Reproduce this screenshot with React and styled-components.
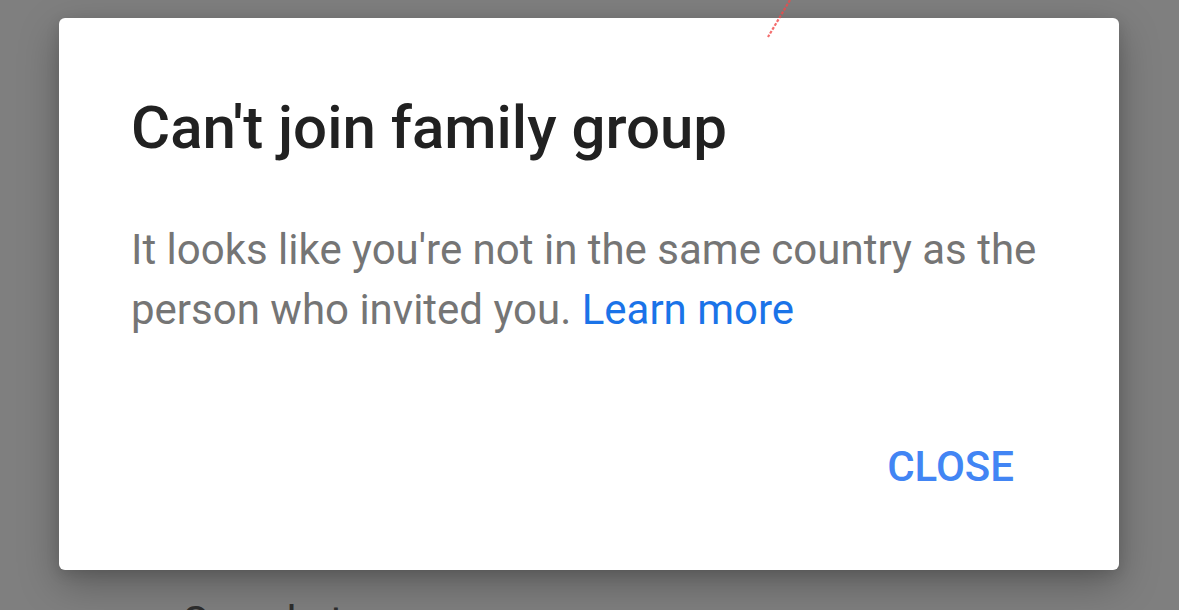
import React from "react";
import styled, { createGlobalStyle } from "styled-components";

const Global = createGlobalStyle`
  html, body { margin: 0; padding: 0; }
  body {
    width: 1179px;
    height: 610px;
    overflow: hidden;
    background: #7f7f7f;
    font-family: Roboto, "Noto Sans", sans-serif;
  }
`;

const Screen = styled.div`
  position: relative;
  width: 1179px;
  height: 610px;
  overflow: hidden;
  display: flex;
  flex-direction: column;
  padding: 18px 0 0 59px;
  box-sizing: border-box;
`;

const Dialog = styled.div`
  width: 1060px;
  height: 552px;
  flex: none;
  box-sizing: border-box;
  background: #ffffff;
  border-radius: 6px;
  box-shadow: 0 14px 40px rgba(0, 0, 0, 0.28), 0 4px 14px rgba(0, 0, 0, 0.12);
  padding: 74px 60px 73px 72px;
  display: flex;
  flex-direction: column;
  position: relative;
  z-index: 1;
`;

const Title = styled.h1`
  margin: 0;
  font-size: 60px;
  line-height: 72px;
  font-weight: 500;
  color: #212121;
`;

const Body = styled.p`
  margin: 56px 0 0;
  font-size: 42px;
  line-height: 60px;
  font-weight: 400;
  color: #757575;
`;

const Link = styled.a`
  color: #1a73e8;
  text-decoration: none;
`;

const Actions = styled.div`
  margin-top: auto;
  padding-right: 45px;
  display: flex;
  justify-content: flex-end;
`;

const TextButton = styled.button`
  border: none;
  background: none;
  padding: 0;
  font-family: inherit;
  font-size: 42px;
  line-height: 60px;
  font-weight: 500;
  color: #4285f4;
  text-transform: uppercase;
`;

const BehindText = styled.div`
  margin: 22px 0 0 124px;
  font-size: 42px;
  line-height: 60px;
  color: #2e2e2e;
  white-space: nowrap;
`;

const Stroke = styled.svg`
  position: absolute;
  left: 764px;
  top: 0;
  z-index: 2;
`;

export default function App() {
  return (
    <>
      <Global />
      <Screen>
        <Dialog>
          <Title>Can't join family group</Title>
          <Body>
            It looks like you're not in the same country as the person who
            invited you. <Link href="#">Learn more</Link>
          </Body>
          <Actions>
            <TextButton>Close</TextButton>
          </Actions>
        </Dialog>
        <BehindText>Saved at</BehindText>
        <Stroke width="30" height="40" viewBox="0 0 30 40">
          <path
            d="M26 0 L4 37"
            stroke="#f04848"
            strokeWidth="2.2"
            strokeDasharray="3 1.5"
            opacity="0.8"
            fill="none"
          />
        </Stroke>
      </Screen>
    </>
  );
}
